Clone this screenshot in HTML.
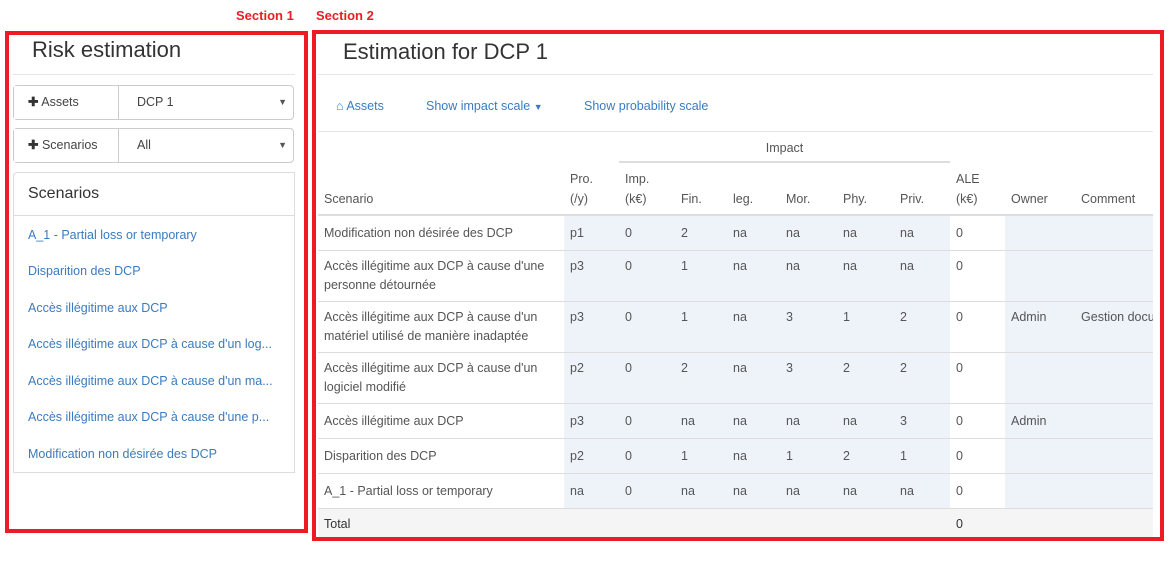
<!DOCTYPE html>
<html><head><meta charset="utf-8"><style>
*{box-sizing:border-box;margin:0;padding:0}
body{width:1168px;height:565px;background:#fff;font-family:"Liberation Sans",sans-serif;font-size:12.5px;color:#555;position:relative;overflow:hidden}
.abs{position:absolute}
.red{border:4px solid #ed1c24}
.lbl{color:#ed1c24;font-weight:bold;font-size:13px}
.link{color:#3a7bbf}
.ig{position:absolute;left:13px;width:281px;height:35px;border:1px solid #ccc;border-radius:4px;display:flex}
.ig .ad{width:105px;border-right:1px solid #ccc;background:#fff;padding-left:14px;line-height:33px;color:#444}
.ig .sel{flex:1;padding-left:18px;line-height:33px;color:#444;position:relative}
.ig .sel:after{content:"▼";position:absolute;right:6px;top:0;font-size:9px;color:#555}
.wrap{position:absolute;left:318px;top:131px;width:835px;overflow:hidden}
table{border-collapse:collapse;table-layout:fixed;width:835px}
td,th{font-weight:normal;text-align:left;vertical-align:top;padding:7px 6px 6px;line-height:20px;white-space:nowrap}
tr.two td{line-height:19px;padding:6px 6px 5px}
tbody td{border-top:1px solid #ddd}
.s{background:#eef3fa}
thead th{vertical-align:bottom;padding:0 6px 5px;line-height:20px}
</style></head><body>
<div class="abs lbl" style="left:236px;top:8px">Section 1</div>
<div class="abs lbl" style="left:316px;top:8px">Section 2</div>

<div class="abs" style="left:32px;top:37px;font-size:22px;color:#333">Risk estimation</div>
<div class="abs" style="left:13px;top:74px;width:282px;height:1px;background:#e5e5e5"></div>
<div class="ig" style="top:85px"><div class="ad"><b style="color:#333">✚</b> Assets</div><div class="sel">DCP 1</div></div>
<div class="ig" style="top:128px"><div class="ad"><b style="color:#333">✚</b> Scenarios</div><div class="sel">All</div></div>
<div class="abs" style="left:13px;top:172px;width:282px;height:44px;border:1px solid #ddd;border-bottom:none;border-radius:4px 0 0 0;padding:12px 14px;font-size:16px;color:#333">Scenarios</div>
<div class="abs" style="left:13px;top:215px;width:282px;height:258px;border:1px solid #ddd">
<div class="link" style="position:absolute;left:14px;top:12px">A_1 - Partial loss or temporary</div>
<div class="link" style="position:absolute;left:14px;top:48px">Disparition des DCP</div>
<div class="link" style="position:absolute;left:14px;top:85px">Accès illégitime aux DCP</div>
<div class="link" style="position:absolute;left:14px;top:121px">Accès illégitime aux DCP à cause d'un log...</div>
<div class="link" style="position:absolute;left:14px;top:158px">Accès illégitime aux DCP à cause d'un ma...</div>
<div class="link" style="position:absolute;left:14px;top:194px">Accès illégitime aux DCP à cause d'une p...</div>
<div class="link" style="position:absolute;left:14px;top:231px">Modification non désirée des DCP</div>
</div>

<div class="abs" style="left:343px;top:39px;font-size:22px;color:#333">Estimation for DCP 1</div>
<div class="abs" style="left:318px;top:74px;width:835px;height:1px;background:#e5e5e5"></div>
<div class="abs link" style="left:336px;top:99px">&#8962; Assets</div>
<div class="abs link" style="left:426px;top:99px">Show impact scale <span style="font-size:9px">▼</span></div>
<div class="abs link" style="left:584px;top:99px">Show probability scale</div>
<div class="abs" style="left:318px;top:131px;width:835px;height:1px;background:#e5e5e5"></div>

<div class="wrap"><table>
<colgroup><col style="width:246px"><col style="width:55px"><col style="width:56px"><col style="width:52px"><col style="width:53px"><col style="width:57px"><col style="width:57px"><col style="width:56px"><col style="width:55px"><col style="width:70px"><col style="width:78px"></colgroup>
<thead>
<tr style="height:31px"><th colspan="2"></th><th colspan="6" style="text-align:center;border-bottom:2px solid #ddd;vertical-align:top;padding:7px 6px 2px">Impact</th><th colspan="3"></th></tr>
<tr style="height:53px;border-bottom:2px solid #ddd"><th>Scenario</th><th>Pro.<br>(/y)</th><th>Imp.<br>(k€)</th><th>Fin.</th><th>leg.</th><th>Mor.</th><th>Phy.</th><th>Priv.</th><th>ALE<br>(k€)</th><th>Owner</th><th>Comment</th></tr>
</thead>
<tbody>
<tr style="height:35px"><td>Modification non désirée des DCP</td><td class="s">p1</td><td class="s">0</td><td class="s">2</td><td class="s">na</td><td class="s">na</td><td class="s">na</td><td class="s">na</td><td>0</td><td class="s"></td><td class="s"></td></tr>
<tr class="two" style="height:51px"><td>Accès illégitime aux DCP à cause d'une<br>personne détournée</td><td class="s">p3</td><td class="s">0</td><td class="s">1</td><td class="s">na</td><td class="s">na</td><td class="s">na</td><td class="s">na</td><td>0</td><td class="s"></td><td class="s"></td></tr>
<tr class="two" style="height:51px"><td>Accès illégitime aux DCP à cause d'un<br>matériel utilisé de manière inadaptée</td><td class="s">p3</td><td class="s">0</td><td class="s">1</td><td class="s">na</td><td class="s">3</td><td class="s">1</td><td class="s">2</td><td>0</td><td class="s">Admin</td><td class="s" style="overflow:hidden">Gestion documentaire</td></tr>
<tr class="two" style="height:51px"><td>Accès illégitime aux DCP à cause d'un<br>logiciel modifié</td><td class="s">p2</td><td class="s">0</td><td class="s">2</td><td class="s">na</td><td class="s">3</td><td class="s">2</td><td class="s">2</td><td>0</td><td class="s"></td><td class="s"></td></tr>
<tr style="height:35px"><td>Accès illégitime aux DCP</td><td class="s">p3</td><td class="s">0</td><td class="s">na</td><td class="s">na</td><td class="s">na</td><td class="s">na</td><td class="s">3</td><td>0</td><td class="s">Admin</td><td class="s"></td></tr>
<tr style="height:35px"><td>Disparition des DCP</td><td class="s">p2</td><td class="s">0</td><td class="s">1</td><td class="s">na</td><td class="s">1</td><td class="s">2</td><td class="s">1</td><td>0</td><td class="s"></td><td class="s"></td></tr>
<tr style="height:35px"><td>A_1 - Partial loss or temporary</td><td class="s">na</td><td class="s">0</td><td class="s">na</td><td class="s">na</td><td class="s">na</td><td class="s">na</td><td class="s">na</td><td>0</td><td class="s"></td><td class="s"></td></tr>
<tr style="height:29px;background:#f5f5f5;font-weight:bold;color:#333"><td style="padding:5px 6px 3px">Total</td><td></td><td></td><td></td><td></td><td></td><td></td><td></td><td style="padding:5px 6px 3px">0</td><td></td><td></td></tr>
</tbody></table></div>

<div class="abs red" style="left:5px;top:31px;width:303px;height:502px"></div>
<div class="abs red" style="left:312px;top:30px;width:852px;height:511px"></div>
</body></html>
